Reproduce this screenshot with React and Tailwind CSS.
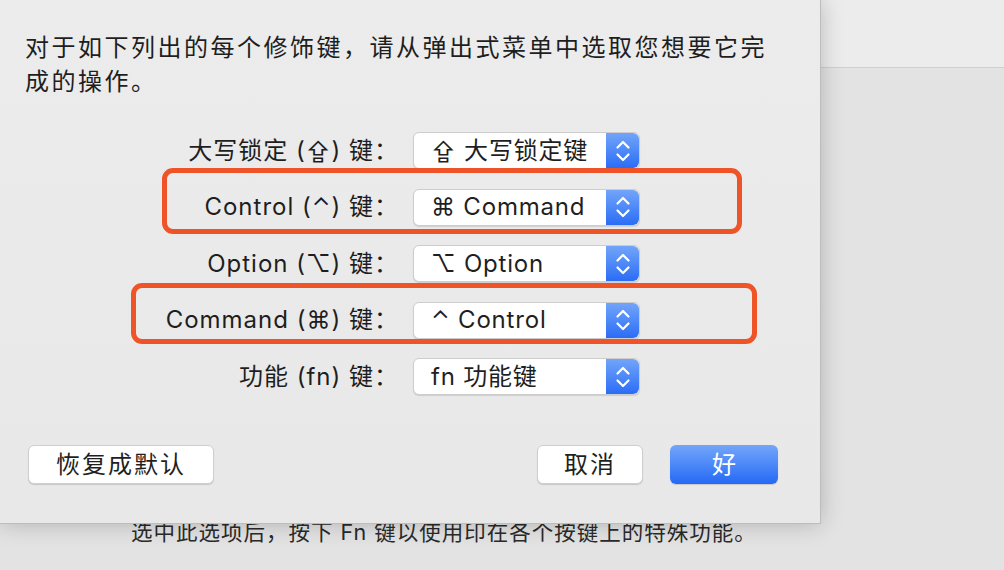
import React from "react";

const rows = [
  { label: "大写锁定 (⇪) 键：", value: "⇪ 大写锁定键" },
  { label: "Control (⌃) 键：", value: "⌘ Command" },
  { label: "Option (⌥) 键：", value: "⌥ Option" },
  { label: "Command (⌘) 键：", value: "⌃ Control" },
  { label: "功能 (fn) 键：", value: "fn 功能键" },
];

const font = {
  fontFamily: '"Inter", "Noto Sans CJK SC", "DejaVu Sans", sans-serif',
};

const Stepper = () => (
  <div className="flex h-full w-[33px] items-center justify-center rounded-r-[6px] bg-gradient-to-b from-[#72a4f9] to-[#2a6cf6]">
    <svg width="16" height="28" viewBox="0 0 16 28" fill="none">
      <path d="M2.5 10.5 L8 5 L13.5 10.5" stroke="white" strokeWidth="2.2" strokeLinecap="round" strokeLinejoin="round" />
      <path d="M2.5 17.5 L8 23 L13.5 17.5" stroke="white" strokeWidth="2.2" strokeLinecap="round" strokeLinejoin="round" />
    </svg>
  </div>
);

const PopUp = ({ value }) => (
  <div className="ml-[14px] flex h-[37px] w-[227px] items-stretch rounded-[6px] border border-[#cdcdcd] bg-white shadow-[0_1px_1px_rgba(0,0,0,0.12)]">
    <div className="flex flex-1 items-center pl-[17px] text-[24px] tracking-[0.8px] text-[#1f1f1f]">{value}</div>
    <Stepper />
  </div>
);

const Button = ({ children, className = "" }) => (
  <button
    className={`flex h-[39px] items-center justify-center rounded-[6px] border border-[#cfcfcf] bg-white text-[24px] tracking-[2px] text-[#1f1f1f] shadow-[0_1px_1px_rgba(0,0,0,0.15)] ${className}`}
  >
    {children}
  </button>
);

export default function App() {
  return (
    <div className="relative h-[570px] w-[1004px] overflow-hidden bg-[#e3e3e3]" style={font}>
      {/* window behind the sheet */}
      <div className="h-[68px] border-b border-[#d0d0d0] bg-[#ececec]" />
      <div className="pl-[131px] pt-[450px] text-[21.5px] leading-[28px] tracking-[1px] text-[#2a2a2a]">
        选中此选项后，按下 Fn 键以使用印在各个按键上的特殊功能。
      </div>

      {/* sheet */}
      <div className="absolute left-0 top-0 flex h-[524px] w-[821px] flex-col border-r border-b border-[#bdbdbd] bg-gradient-to-b from-[#ececec] to-[#e8e8e8] shadow-[0_0_22px_rgba(0,0,0,0.22)]">
        <p className="w-[770px] pl-[25px] pt-[31px] text-[24px] leading-[34px] tracking-[2.5px] text-[#1e1e1e]">
          对于如下列出的每个修饰键，请从弹出式菜单中选取您想要它完成的操作。
        </p>

        <div className="mt-[33px] flex flex-col gap-[19.5px]">
          {rows.map((r) => (
            <div key={r.label} className="flex items-center">
              <div className="w-[399px] text-right text-[24px] tracking-[1px] text-[#1e1e1e]">{r.label}</div>
              <PopUp value={r.value} />
            </div>
          ))}
        </div>

        <div className="mt-[50px] flex items-center pl-[28px] pr-[42px]">
          <Button className="w-[186px]">恢复成默认</Button>
          <div className="flex-1" />
          <Button className="w-[106px]">取消</Button>
          <button className="ml-[27px] flex h-[39px] w-[108px] items-center justify-center rounded-[6px] bg-gradient-to-b from-[#73a5f9] to-[#2468f5] text-[24px] text-white shadow-[0_1px_1px_rgba(0,0,0,0.15)]">
            好
          </button>
        </div>
      </div>

      {/* annotation boxes */}
      <div className="absolute left-[162px] top-[168px] h-[66px] w-[580px] rounded-[11px] border-[5px] border-[#ef5428]" />
      <div className="absolute left-[131px] top-[283px] h-[61px] w-[626px] rounded-[11px] border-[5px] border-[#ef5428]" />
    </div>
  );
}
